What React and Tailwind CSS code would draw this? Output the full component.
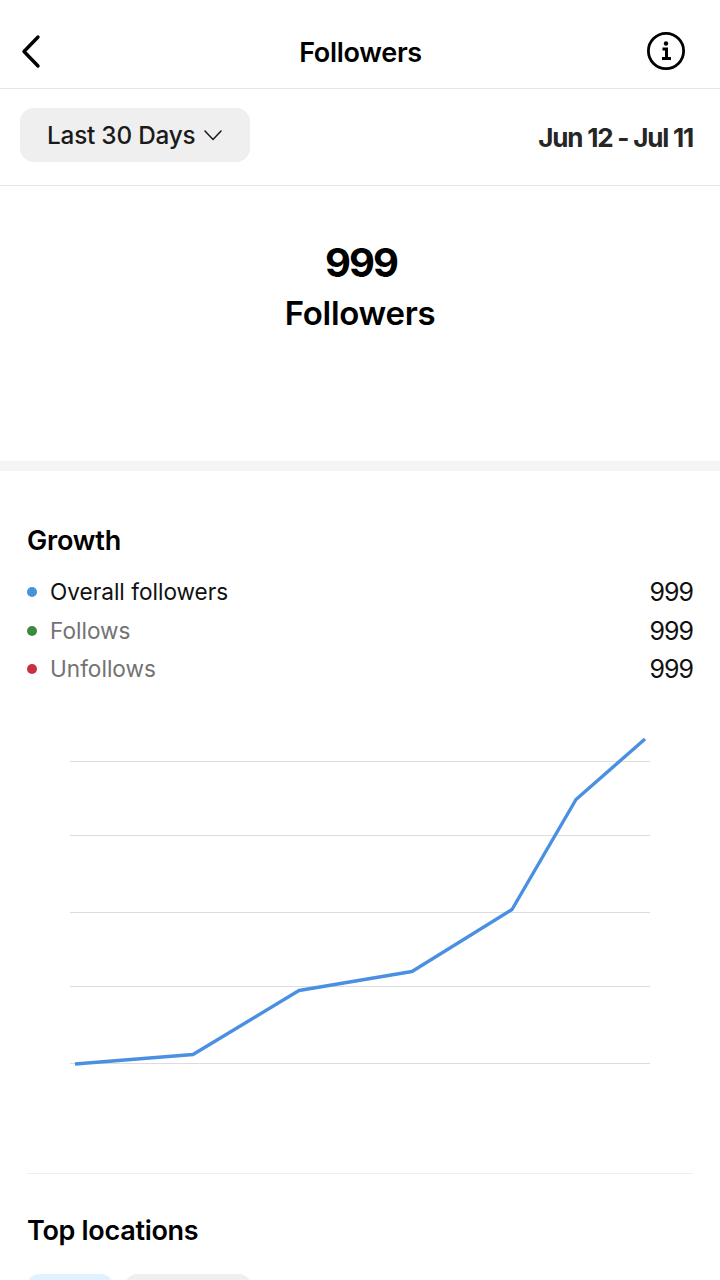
const font = { fontFamily: 'Inter, sans-serif' };

function BackIcon() {
  return (
    <svg width="24" height="36" viewBox="0 0 24 36" fill="none">
      <path d="M18 4 L4 18.5 L18 33" stroke="#000" strokeWidth="3.4" strokeLinecap="round" strokeLinejoin="round" />
    </svg>
  );
}

function InfoIcon() {
  return (
    <svg width="40" height="40" viewBox="0 0 40 40" fill="none">
      <circle cx="20" cy="20" r="17.6" stroke="#000" strokeWidth="2.8" />
      <circle cx="20" cy="12.5" r="2.2" fill="#000" />
      <path d="M16.5 18 H20.5 V27.5 M16 27.5 H25" stroke="#000" strokeWidth="3" />
    </svg>
  );
}

function ChevronIcon() {
  return (
    <svg width="18" height="11" viewBox="0 0 18 11" fill="none">
      <path d="M1 1 L9 9.5 L17 1" stroke="#1a1a1a" strokeWidth="1.5" strokeLinecap="round" strokeLinejoin="round" />
    </svg>
  );
}

function LegendRow({ color, label, textColor, rowClass }) {
  return (
    <div className={`flex items-center justify-between ${rowClass}`}>
      <div className="flex items-center">
        <span className={`w-[10px] h-[10px] rounded-full ${color}`} />
        <span className={`ml-[13px] text-[22.6px] leading-[28px] ${textColor}`}>{label}</span>
      </div>
      <span className="text-[25px] leading-[28px] tracking-[-1px] text-[#111]">999</span>
    </div>
  );
}

function GrowthChart() {
  const grid = [761, 835, 912, 986, 1063];
  return (
    <svg className="block mt-[37px]" width="720" height="390" viewBox="0 720 720 390" fill="none">
      {grid.map(y => (
        <line key={y} x1="70" x2="650" y1={y + 0.5} y2={y + 0.5} stroke="#dcdcdc" strokeWidth="1.2" />
      ))}
      <polyline
        points="75,1064 193,1054.5 299,990.5 412,971.5 512,909.5 576,799.5 645,739"
        stroke="#4a90e2"
        strokeWidth="3.4"
        strokeLinejoin="round"
      />
    </svg>
  );
}

export default function App() {
  return (
    <div className="w-[720px] h-[1280px] overflow-hidden bg-white text-black" style={font}>
      {/* Header */}
      <div className="h-[89px] border-b border-[#e6e6e6] grid grid-cols-[1fr_auto_1fr] items-center px-[20px] pt-[13px]">
        <BackIcon />
        <h1 className="text-[27px] font-semibold tracking-[-0.3px] leading-none pt-[3px] pl-[1px]">Followers</h1>
        <div className="justify-self-end mr-[14px]">
          <InfoIcon />
        </div>
      </div>

      {/* Date filter */}
      <div className="h-[97px] border-b border-[#e6e6e6] flex items-center justify-between pl-[20px] pr-[27px] pb-[4px]">
        <button className="w-[230px] h-[54px] rounded-[14px] bg-[#efefef] flex items-center pl-[27px] gap-[9px]">
          <span className="text-[24.3px] font-medium tracking-[-0.2px] text-[#1a1a1a]">Last 30 Days</span>
          <ChevronIcon />
        </button>
        <span className="text-[26px] font-bold tracking-[-1.2px] text-[#262626] pt-[4px]">Jun 12 - Jul 11</span>
      </div>

      {/* Total */}
      <div className="h-[275px] flex flex-col items-center pt-[51px]">
        <div className="text-[40px] font-bold leading-[52px] tracking-[-2px] pl-[2px]">999</div>
        <div className="text-[33px] font-semibold leading-[49px] tracking-[-0.3px]">Followers</div>
      </div>
      <div className="h-[10px] bg-[#f5f5f5]" />

      {/* Growth */}
      <div className="pt-[54px]">
        <div className="px-[27px]">
          <h2 className="text-[27px] font-semibold leading-[32px] tracking-[-0.2px]">Growth</h2>
          <div className="mt-[21px]">
            <LegendRow color="bg-[#4a90e2]" label="Overall followers" textColor="text-[#111]" rowClass="h-[28px]" />
            <LegendRow color="bg-[#3d8b40]" label="Follows" textColor="text-[#737373]" rowClass="h-[28px] mt-[11px]" />
            <LegendRow color="bg-[#c8323f]" label="Unfollows" textColor="text-[#737373]" rowClass="h-[28px] mt-[10px]" />
          </div>
        </div>
        <GrowthChart />
      </div>

      {/* Top locations */}
      <div className="mx-[27px] mt-[63px] border-t border-[#efefef] pt-[39px]">
        <h2 className="text-[27px] font-semibold leading-[36px] tracking-[-0.3px]">Top locations</h2>
        <div className="flex gap-[12px] mt-[25px]">
          <div className="w-[86px] h-[40px] rounded-[12px] bg-[#e0f1ff]" />
          <div className="w-[126px] h-[40px] rounded-[12px] bg-[#efefef]" />
        </div>
      </div>
    </div>
  );
}
